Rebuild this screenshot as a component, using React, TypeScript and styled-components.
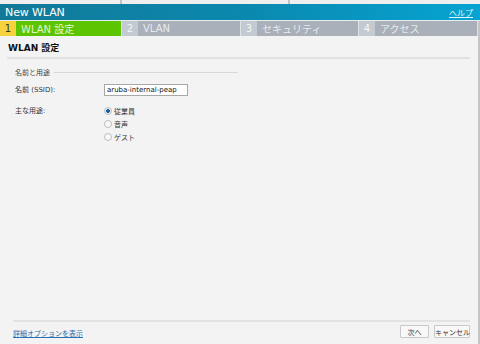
import React, {FC} from 'react';
import styled, {createGlobalStyle} from "styled-components";

const GlobalStyle = createGlobalStyle`
  html, body {
    margin: 0;
    padding: 0;
    background: #ececec;
  }

  body {
    width: 480px;
    height: 344px;
    overflow: hidden;
    font-family: "DejaVu Sans", "Noto Sans CJK JP", sans-serif;
  }
`

type TStep = {
    num: number
    label: string
}

const steps: TStep[] = [
    {num: 1, label: "WLAN 設定"},
    {num: 2, label: "VLAN"},
    {num: 3, label: "セキュリティ"},
    {num: 4, label: "アクセス"},
]

const uses = ["従業員", "音声", "ゲスト"]

export default function App() {
    return (
        <>
            <GlobalStyle/>
            <Backdrop>
                <BackPane $w={121}/>
                <BackPane $w={167}/>
                <BackPane $w={192}/>
            </Backdrop>
            <Dialog>
                <TitleBar>
                    <Title>New WLAN</Title>
                    <HelpLink href="#">ヘルプ</HelpLink>
                </TitleBar>
                <Body>
                    <Steps>
                        {steps.map((s, i) => (
                            <StepItem key={s.num} step={s} active={i === 0}/>
                        ))}
                    </Steps>
                    <Content>
                        <Heading>WLAN 設定</Heading>
                        <Fieldset>
                            <Legend>
                                <span>名前と用途</span>
                                <LegendLine/>
                            </Legend>
                            <FormRow $top={7}>
                                <Label>名前 (SSID):</Label>
                                <TextInput defaultValue="aruba-internal-peap"/>
                            </FormRow>
                            <FormRow $top={9}>
                                <Label>主な用途:</Label>
                                <RadioList>
                                    {uses.map((u, i) => (
                                        <RadioRow key={u}>
                                            <Radio $checked={i === 0}/>
                                            <span>{u}</span>
                                        </RadioRow>
                                    ))}
                                </RadioList>
                            </FormRow>
                        </Fieldset>
                    </Content>
                    <Footer>
                        <MoreLink href="#">詳細オプションを表示</MoreLink>
                        <Buttons>
                            <Button $w={29}>次へ</Button>
                            <Button $w={36}>キャンセル</Button>
                        </Buttons>
                    </Footer>
                </Body>
            </Dialog>
        </>
    );
}

const StepItem: FC<{ step: TStep, active: boolean }> = ({step, active}) => (
    <Step>
        <StepNum $active={active}>{step.num}</StepNum>
        <StepLabel $active={active}>{step.label}</StepLabel>
    </Step>
)

const Backdrop = styled.div`
  height: 4px;
  display: flex;
`

const BackPane = styled.div<{ $w: number }>`
  width: ${({$w}) => $w}px;
  border-right: 2px solid #c4c4c4;
  background: #efefef;
  &:last-child {
    border-right: none;
  }
`

const Dialog = styled.div`
  height: 340px;
  display: flex;
  flex-direction: column;
`

const TitleBar = styled.div`
  height: 16px;
  padding: 0 7px 0 5px;
  display: flex;
  align-items: center;
  justify-content: space-between;
  background: linear-gradient(90deg, #127998 0%, #0b88ae 50%, #06a4d2 100%);
  border-bottom: 1px solid #e6eef2;
`

const Title = styled.div`
  color: #ffffff;
  font-size: 11px;
  font-family: "DejaVu Sans", sans-serif;
  letter-spacing: -0.1px;
`

const HelpLink = styled.a`
  color: #e4f4fb;
  font-size: 8px;
  font-family: "Noto Sans CJK JP", sans-serif;
  text-decoration: underline;
`

const Body = styled.div`
  flex: 1;
  display: flex;
  flex-direction: column;
  background: #f3f3f3;
  border-left: 2px solid #d4d4d4;
  border-right: 2px solid #c4c4c4;
  margin-left: -2px;
  width: 478px;
`

const Steps = styled.div`
  display: grid;
  grid-template-columns: 121px 118px 117px 118px;
  column-gap: 1px;
  height: 15px;
  padding-right: 1px;
  background: #dfe2e5;
`

const Step = styled.div`
  display: flex;
  height: 15px;
`

const StepNum = styled.div<{ $active: boolean }>`
  width: 16px;
  display: flex;
  align-items: center;
  justify-content: center;
  font-size: 10px;
  background: ${({$active}) => $active ? "#f6d23c" : "#c4cad1"};
  color: ${({$active}) => $active ? "#333333" : "#f4f6f8"};
`

const StepLabel = styled.div<{ $active: boolean }>`
  flex: 1;
  display: flex;
  align-items: center;
  padding-left: 5px;
  font-size: 10px;
  background: ${({$active}) => $active ? "#5cc400" : "#a9b0b9"};
  color: ${({$active}) => $active ? "#e4f7cc" : "#e8ebee"};
`

const Content = styled.div`
  flex: 1;
  padding: 5px 8px 0 7px;
`

const Heading = styled.div`
  font-size: 9px;
  font-weight: bold;
  color: #111111;
  padding: 0 0 3px 1px;
  border-bottom: 2px solid #e2e2e2;
`

const Fieldset = styled.div`
  padding: 8px 0 0 8px;
`

const Legend = styled.div`
  display: flex;
  align-items: center;
  width: 223px;
  font-size: 7px;
  color: #444444;
`

const LegendLine = styled.div`
  flex: 1;
  margin-left: 4px;
  height: 1px;
  background: #d8d8d8;
`

const FormRow = styled.div<{ $top: number }>`
  display: flex;
  align-items: flex-start;
  margin-top: ${({$top}) => $top}px;
`

const Label = styled.div`
  width: 89px;
  font-size: 7px;
  color: #333333;
  line-height: 12px;
`

const TextInput = styled.input`
  width: 78px;
  height: 8px;
  padding: 1px 2px;
  border: 1px solid #a8a8a8;
  font-size: 7px;
  font-family: "DejaVu Sans", sans-serif;
  color: #111111;
  outline: none;
`

const RadioList = styled.div`
  display: flex;
  flex-direction: column;
  gap: 3px;
  padding-top: 1px;
`

const RadioRow = styled.div`
  display: flex;
  align-items: center;
  gap: 2px;
  font-size: 7px;
  color: #333333;
  height: 10px;
`

const Radio = styled.span<{ $checked: boolean }>`
  width: 6px;
  height: 6px;
  border-radius: 50%;
  border: 1px solid #bdbdbd;
  background: ${({$checked}) => $checked
    ? "radial-gradient(circle, #1d5f9c 0 1.6px, #eef2f6 2.2px)"
    : "#f8f8f8"};
`

const Footer = styled.div`
  margin: 0 8px 0 13px;
  padding: 3px 0 6px 0;
  border-top: 2px solid #e2e2e2;
  display: flex;
  align-items: center;
  justify-content: space-between;
`

const MoreLink = styled.a`
  font-size: 7px;
  color: #2a6fb0;
  text-decoration: underline;
  margin-top: 2px;
`

const Buttons = styled.div`
  display: flex;
  gap: 5px;
`

const Button = styled.button<{ $w: number }>`
  width: ${({$w}) => $w}px;
  height: 13px;
  padding: 0;
  white-space: nowrap;
  font-size: 7px;
  font-family: "Noto Sans CJK JP", sans-serif;
  color: #333333;
  background: #f8f8f8;
  border: 1px solid #c8c8c8;
  border-radius: 1px;
`
